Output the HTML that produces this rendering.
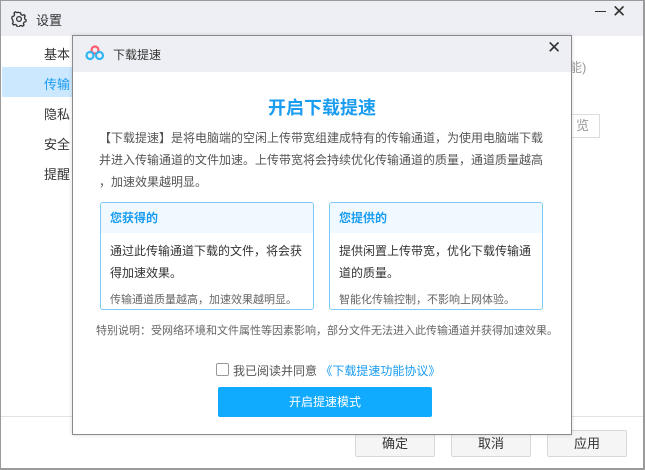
<!DOCTYPE html><html><head><meta charset="utf-8"><style>
*{margin:0;padding:0;box-sizing:border-box}
body{width:645px;height:470px;overflow:hidden;background:#fff;font-family:"Liberation Sans","Noto Sans CJK SC",sans-serif;position:relative}
.abs{position:absolute}
.win{left:0;top:0;width:645px;height:470px;border:1px solid #9a9a9a;border-right-width:2px;border-bottom-width:2px}
.tb{left:1px;top:1px;width:642px;height:35px;background:#eeeff4}
.side{font-size:13px;color:#333;left:44px}
.btn{height:27px;width:80px;border:1px solid #d8d8d8;background:#f5f5f5;font-size:13px;color:#333;text-align:center;line-height:25px;border-radius:2px}
.dlg{left:72px;top:35px;width:500px;height:400px;border:1px solid #8a8a8a;background:#fff;box-shadow:0 0 4px rgba(0,0,0,.15)}
.dtb{left:0;top:0;width:498px;height:36px;background:#eeeff4}
p.t{font-size:12px;color:#555;line-height:22px}
.box{top:166px;width:214px;height:108px;border:1px solid #7cc8f8;border-radius:3px;overflow:hidden}
.bh{height:30px;background:#f0f9ff;color:#1a9cf0;font-weight:bold;font-size:12px;line-height:30px;padding-left:9px}
.bb{font-size:12px;color:#333;line-height:22px;padding:7px 9px 0}
.bs{font-size:11px;color:#666;padding:7px 9px 0;white-space:nowrap}
</style></head><body>
<div class="abs win"></div>
<div class="abs tb"></div>
<svg class="abs" style="left:11px;top:11px" width="16" height="16" viewBox="0 0 16 16"><path d="M8 1.5l1.6.4.4 1.6 1.5.8 1.6-.6 1.1 1.3-.7 1.5.3 1.5 1.4 1-.4 1.6-1.6.4-.8 1.5.6 1.6-1.3 1.1-1.5-.7-1.5.3-1 1.4-1.6-.4-.4-1.6-1.5-.8-1.6.6-1.1-1.3.7-1.5-.3-1.5L.8 7.1l.4-1.6 1.6-.4.8-1.5-.6-1.6 1.3-1.1 1.5.7 1.5-.3z" fill="none" stroke="#333" stroke-width="1.3"/><circle cx="8" cy="8" r="2.4" fill="none" stroke="#333" stroke-width="1.3"/></svg>
<div class="abs" style="left:36px;top:10px;font-size:13px;color:#333">设置</div>
<div class="abs" style="left:595px;top:11px;width:11px;height:1px;background:#333"></div>
<div class="abs" style="left:612px;top:2px;font-size:17px;color:#333">✕</div>
<div class="abs" style="left:2px;top:67px;width:70px;height:30px;background:#cce8ff"></div>
<div class="abs side" style="top:44px">基本</div>
<div class="abs side" style="top:74px;color:#1a9cf0">传输</div>
<div class="abs side" style="top:104px">隐私</div>
<div class="abs side" style="top:134px">安全</div>
<div class="abs side" style="top:164px">提醒</div>
<div class="abs" style="left:569px;top:57px;font-size:13px;color:#999">能)</div>
<div class="abs" style="left:560px;top:114px;width:40px;height:24px;border:1px solid #ddd;border-left:none;font-size:13px;color:#999;line-height:22px;text-align:right;padding-right:10px">览</div>
<div class="abs" style="left:1px;top:416px;width:642px;height:1px;background:#e3e3e3"></div>
<div class="abs btn" style="left:355px;top:430px">确定</div>
<div class="abs btn" style="left:451px;top:430px">取消</div>
<div class="abs btn" style="left:547px;top:430px">应用</div>

<div class="abs dlg">
<div class="abs dtb"></div>
<svg class="abs" style="left:12px;top:9px" width="20" height="16" viewBox="0 0 20 16"><circle cx="10" cy="5" r="3.5" fill="none" stroke="#ff5a6e" stroke-width="2.2"/><circle cx="5" cy="10.5" r="3.5" fill="none" stroke="#2fb6f5" stroke-width="2.2"/><circle cx="14.5" cy="10.5" r="3.5" fill="none" stroke="#2fb6f5" stroke-width="2.2"/></svg>
<div class="abs" style="left:40px;top:10px;font-size:12px;color:#333">下载提速</div>
<div class="abs" style="left:474px;top:2px;font-size:17px;color:#333">✕</div>
<div class="abs" style="left:0;top:58px;width:498px;text-align:center;font-size:18px;font-weight:bold;color:#1a9cf0">开启下载提速</div>
<div class="abs" style="left:26px;top:91px;width:460px"><p class="t">【下载提速】是将电脑端的空闲上传带宽组建成特有的传输通道，为使用电脑端下载<br>并进入传输通道的文件加速。上传带宽将会持续优化传输通道的质量，通道质量越高<br>，加速效果越明显。</p></div>
<div class="abs box" style="left:27px"><div class="bh">您获得的</div><div class="bb">通过此传输通道下载的文件，将会获得加速效果。</div><div class="bs">传输通道质量越高，加速效果越明显。</div></div>
<div class="abs box" style="left:256px"><div class="bh">您提供的</div><div class="bb">提供闲置上传带宽，优化下载传输通道的质量。</div><div class="bs">智能化传输控制，不影响上网体验。</div></div>
<div class="abs" style="left:23px;top:286px;font-size:11px;color:#666;white-space:nowrap">特别说明：受网络环境和文件属性等因素影响，部分文件无法进入此传输通道并获得加速效果。</div>
<div class="abs" style="left:143px;top:327px;width:13px;height:13px;border:1px solid #999;border-radius:2px"></div>
<div class="abs" style="left:160px;top:326px;font-size:12px;color:#555;white-space:nowrap">我已阅读并同意 <span style="color:#1a9cf0">《下载提速功能协议》</span></div>
<div class="abs" style="left:145px;top:351px;width:214px;height:30px;background:#10aaff;border-radius:2px;color:#fff;font-size:12px;text-align:center;line-height:30px">开启提速模式</div>
</div>
</body></html>
